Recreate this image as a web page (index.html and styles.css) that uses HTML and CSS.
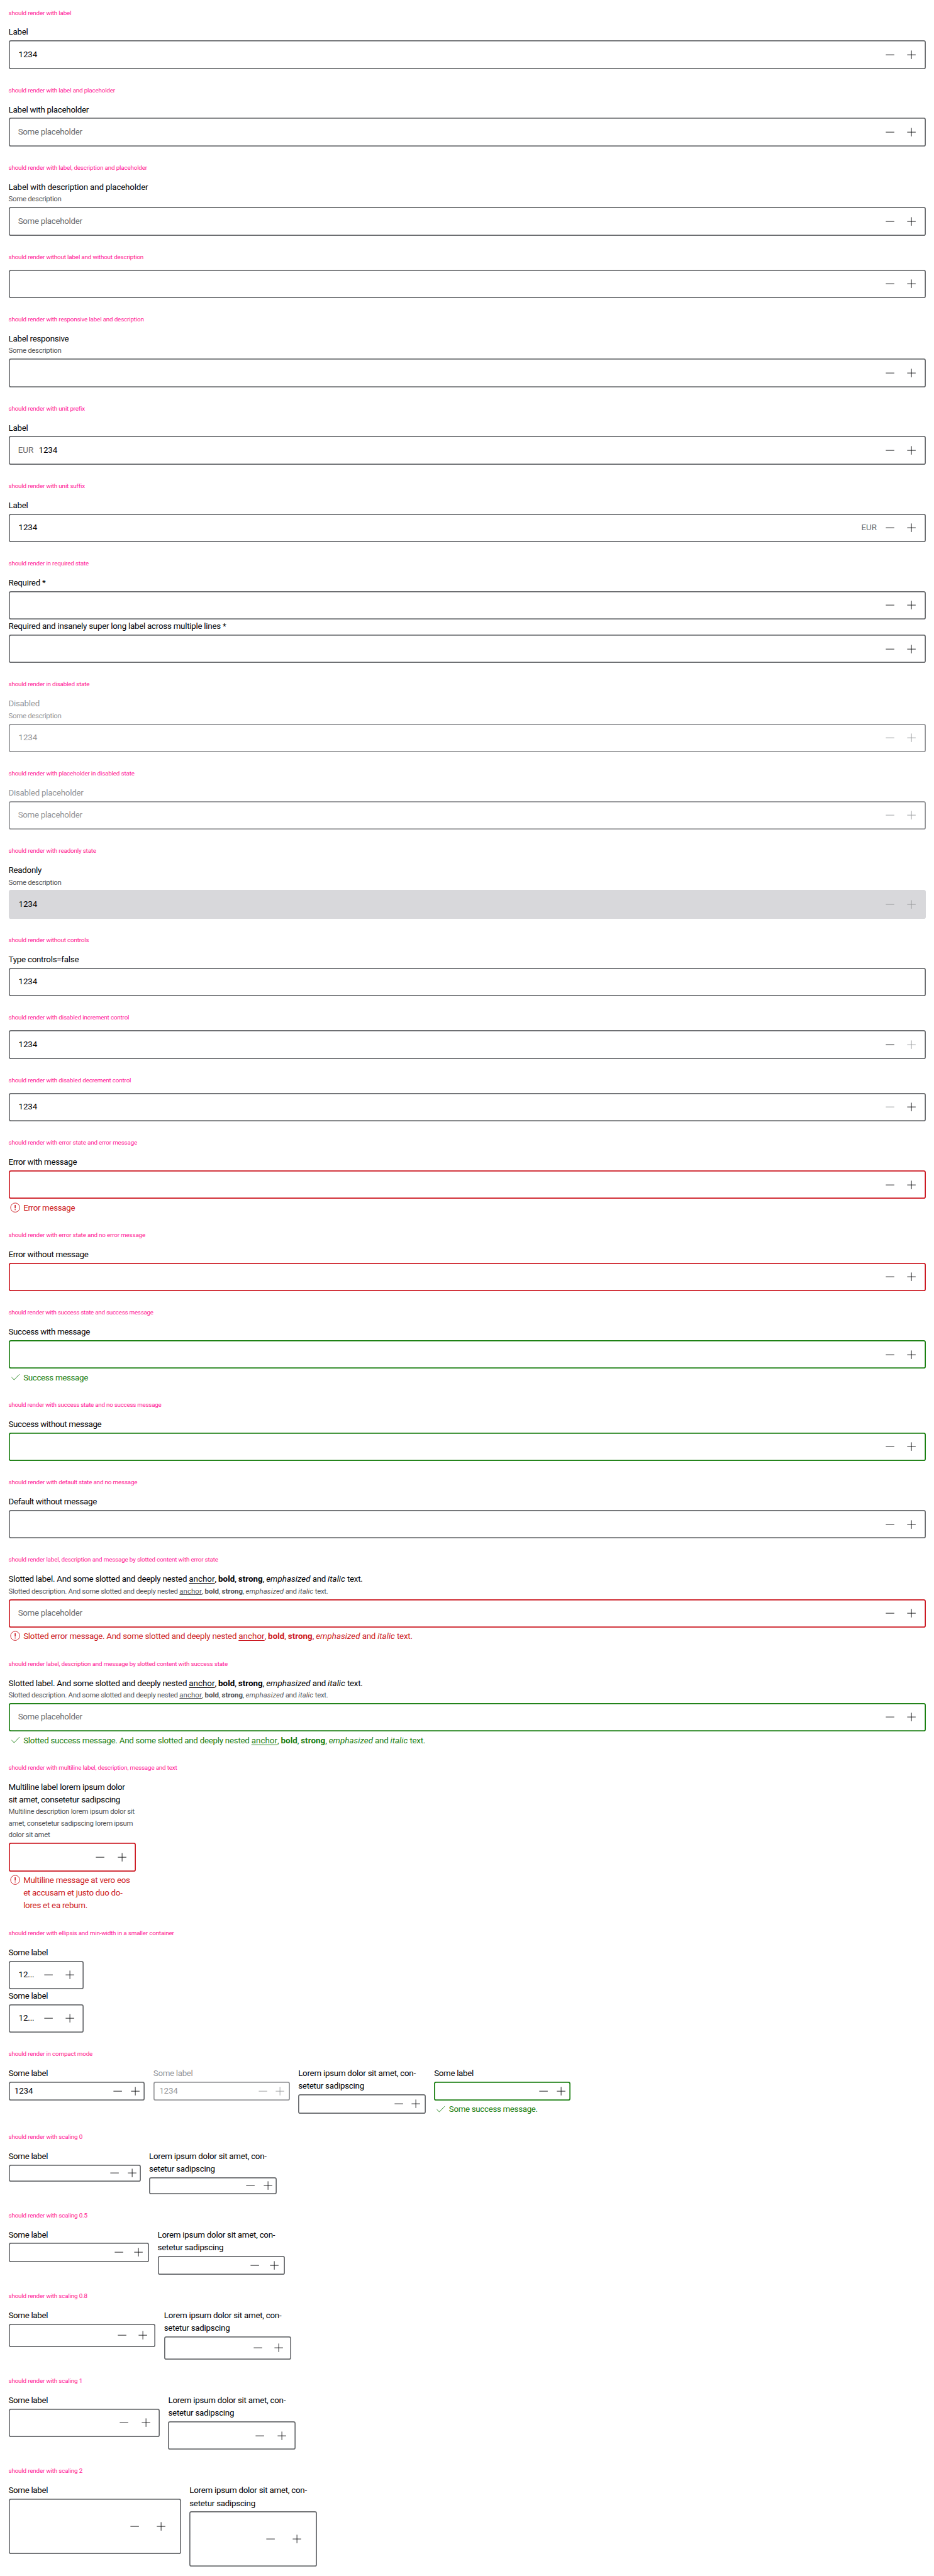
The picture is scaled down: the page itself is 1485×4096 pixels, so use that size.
FILE: index.html
```html
<!DOCTYPE html>
<html lang="en">
<head>
<meta charset="utf-8">
<title>Number input states</title>
<link rel="stylesheet" href="styles.css">
</head>
<body>
<svg class="sprite" aria-hidden="true">
  <symbol id="minus" viewBox="0 0 24 24"><path d="M4 12H20"/></symbol>
  <symbol id="plus" viewBox="0 0 24 24"><path d="M4 12H20M12 4V20"/></symbol>
  <symbol id="error" viewBox="0 0 24 24"><circle cx="12" cy="12" r="8.6"/><path class="bar" d="M12 7.2V13.4M12 15V16.8"/></symbol>
  <symbol id="check" viewBox="0 0 24 24"><path d="M5.2 11.8L10 16.6L20 6.2"/></symbol>
</svg>

<section>
  <h2>should render with label</h2>
  <div class="field"><div class="label">Label</div><div class="box"><span class="value">1234</span><svg><use href="#minus"/></svg><svg><use href="#plus"/></svg></div></div>
</section>
<section>
  <h2>should render with label and placeholder</h2>
  <div class="field"><div class="label">Label with placeholder</div><div class="box"><span class="placeholder">Some placeholder</span><svg><use href="#minus"/></svg><svg><use href="#plus"/></svg></div></div>
</section>
<section>
  <h2>should render with label, description and placeholder</h2>
  <div class="field"><div class="label wide">Label with description and placeholder</div><div class="desc">Some description</div><div class="box"><span class="placeholder">Some placeholder</span><svg><use href="#minus"/></svg><svg><use href="#plus"/></svg></div></div>
</section>
<section>
  <h2>should render without label and without description</h2>
  <div class="field"><div class="box"><svg><use href="#minus"/></svg><svg><use href="#plus"/></svg></div></div>
</section>
<section>
  <h2>should render with responsive label and description</h2>
  <div class="field"><div class="label">Label responsive</div><div class="desc">Some description</div><div class="box"><svg><use href="#minus"/></svg><svg><use href="#plus"/></svg></div></div>
</section>
<section>
  <h2>should render with unit prefix</h2>
  <div class="field"><div class="label">Label</div><div class="box"><span class="unit prefix">EUR</span><span class="value">1234</span><svg><use href="#minus"/></svg><svg><use href="#plus"/></svg></div></div>
</section>
<section>
  <h2>should render with unit suffix</h2>
  <div class="field"><div class="label">Label</div><div class="box"><span class="value">1234</span><span class="unit suffix">EUR</span><svg><use href="#minus"/></svg><svg><use href="#plus"/></svg></div></div>
</section>
<section>
  <h2>should render in required state</h2>
  <div class="field"><div class="label">Required *</div><div class="box"><svg><use href="#minus"/></svg><svg><use href="#plus"/></svg></div></div>
  <div class="field"><div class="label">Required and insanely super long label across multiple lines *</div><div class="box"><svg><use href="#minus"/></svg><svg><use href="#plus"/></svg></div></div>
</section>
<section>
  <h2>should render in disabled state</h2>
  <div class="field disabled"><div class="label">Disabled</div><div class="desc">Some description</div><div class="box"><span class="value">1234</span><svg><use href="#minus"/></svg><svg><use href="#plus"/></svg></div></div>
</section>
<section>
  <h2>should render with placeholder in disabled state</h2>
  <div class="field disabled"><div class="label">Disabled placeholder</div><div class="box"><span class="placeholder">Some placeholder</span><svg><use href="#minus"/></svg><svg><use href="#plus"/></svg></div></div>
</section>
<section>
  <h2>should render with readonly state</h2>
  <div class="field readonly"><div class="label">Readonly</div><div class="desc">Some description</div><div class="box"><span class="value">1234</span><svg><use href="#minus"/></svg><svg><use href="#plus"/></svg></div></div>
</section>
<section>
  <h2>should render without controls</h2>
  <div class="field"><div class="label">Type controls=false</div><div class="box"><span class="value">1234</span></div></div>
</section>
<section>
  <h2>should render with disabled increment control</h2>
  <div class="field"><div class="box"><span class="value">1234</span><svg><use href="#minus"/></svg><svg class="off"><use href="#plus"/></svg></div></div>
</section>
<section>
  <h2>should render with disabled decrement control</h2>
  <div class="field"><div class="box"><span class="value">1234</span><svg class="off"><use href="#minus"/></svg><svg><use href="#plus"/></svg></div></div>
</section>
<section>
  <h2>should render with error state and error message</h2>
  <div class="field error"><div class="label tight">Error with message</div><div class="box"><svg><use href="#minus"/></svg><svg><use href="#plus"/></svg></div><div class="message"><svg><use href="#error"/></svg><span class="tight">Error message</span></div></div>
</section>
<section>
  <h2>should render with error state and no error message</h2>
  <div class="field error"><div class="label tight">Error without message</div><div class="box"><svg><use href="#minus"/></svg><svg><use href="#plus"/></svg></div></div>
</section>
<section>
  <h2 class="dense">should render with success state and success message</h2>
  <div class="field success"><div class="label tight">Success with message</div><div class="box"><svg><use href="#minus"/></svg><svg><use href="#plus"/></svg></div><div class="message"><svg><use href="#check"/></svg><span class="tight">Success message</span></div></div>
</section>
<section>
  <h2 class="dense">should render with success state and no success message</h2>
  <div class="field success"><div class="label tight">Success without message</div><div class="box"><svg><use href="#minus"/></svg><svg><use href="#plus"/></svg></div></div>
</section>
<section>
  <h2>should render with default state and no message</h2>
  <div class="field"><div class="label tight">Default without message</div><div class="box"><svg><use href="#minus"/></svg><svg><use href="#plus"/></svg></div></div>
</section>
<section>
  <h2>should render label, description and message by slotted content with error state</h2>
  <div class="field error"><div class="label">Slotted label. And some slotted and deeply nested <u>anchor</u>, <b>bold</b>, <strong>strong</strong>, <em>emphasized</em> and <i>italic</i> text.</div><div class="desc">Slotted description. And some slotted and deeply nested <u>anchor</u>, <b>bold</b>, <strong>strong</strong>, <em>emphasized</em> and <i>italic</i> text.</div><div class="box"><span class="placeholder">Some placeholder</span><svg><use href="#minus"/></svg><svg><use href="#plus"/></svg></div><div class="message"><svg><use href="#error"/></svg><span>Slotted error message. And some slotted and deeply nested <u>anchor</u>, <b>bold</b>, <strong>strong</strong>, <em>emphasized</em> and <i>italic</i> text.</span></div></div>
</section>
<section>
  <h2>should render label, description and message by slotted content with success state</h2>
  <div class="field success"><div class="label">Slotted label. And some slotted and deeply nested <u>anchor</u>, <b>bold</b>, <strong>strong</strong>, <em>emphasized</em> and <i>italic</i> text.</div><div class="desc">Slotted description. And some slotted and deeply nested <u>anchor</u>, <b>bold</b>, <strong>strong</strong>, <em>emphasized</em> and <i>italic</i> text.</div><div class="box"><span class="placeholder">Some placeholder</span><svg><use href="#minus"/></svg><svg><use href="#plus"/></svg></div><div class="message"><svg><use href="#check"/></svg><span>Slotted success message. And some slotted and deeply nested <u>anchor</u>, <b>bold</b>, <strong>strong</strong>, <em>emphasized</em> and <i>italic</i> text.</span></div></div>
</section>
<section>
  <h2>should render with multiline label, description, message and text</h2>
  <div class="field error narrow"><div class="label">Multiline label lorem ipsum dolor<br>sit amet, consetetur sadipscing</div><div class="desc">Multiline description lorem ipsum dolor sit<br>amet, consetetur sadipscing lorem ipsum<br>dolor sit amet</div><div class="box"><svg><use href="#minus"/></svg><svg><use href="#plus"/></svg></div><div class="message"><svg><use href="#error"/></svg><span>Multiline message at vero eos<br>et accusam et justo duo do-<br>lores et ea rebum.</span></div></div>
</section>
<section>
  <h2>should render with ellipsis and min-width in a smaller container</h2>
  <div class="field smallest"><div class="label tight">Some label</div><div class="box"><span class="value">12...</span><svg><use href="#minus"/></svg><svg><use href="#plus"/></svg></div></div>
  <div class="field smallest"><div class="label tight">Some label</div><div class="box"><span class="value">12...</span><svg><use href="#minus"/></svg><svg><use href="#plus"/></svg></div></div>
</section>
<section>
  <h2>should render in compact mode</h2>
  <div class="row compact">
    <div class="field"><div class="label tight">Some label</div><div class="box"><span class="value">1234</span><svg><use href="#minus"/></svg><svg><use href="#plus"/></svg></div></div>
    <div class="field disabled"><div class="label tight">Some label</div><div class="box"><span class="value">1234</span><svg><use href="#minus"/></svg><svg><use href="#plus"/></svg></div></div>
    <div class="field narrow"><div class="label">Lorem ipsum dolor sit amet, con-<br>setetur sadipscing</div><div class="box"><svg><use href="#minus"/></svg><svg><use href="#plus"/></svg></div></div>
    <div class="field success"><div class="label tight">Some label</div><div class="box"><svg><use href="#minus"/></svg><svg><use href="#plus"/></svg></div><div class="message"><svg><use href="#check"/></svg><span class="tight">Some success message.</span></div></div>
  </div>
</section>
<section>
  <h2>should render with scaling 0</h2>
  <div class="row scale-0">
    <div class="field"><div class="label tight">Some label</div><div class="box"><svg><use href="#minus"/></svg><svg><use href="#plus"/></svg></div></div>
    <div class="field narrow"><div class="label">Lorem ipsum dolor sit amet, con-<br>setetur sadipscing</div><div class="box"><svg><use href="#minus"/></svg><svg><use href="#plus"/></svg></div></div>
  </div>
</section>
<section>
  <h2>should render with scaling 0.5</h2>
  <div class="row scale-05">
    <div class="field"><div class="label tight">Some label</div><div class="box"><svg><use href="#minus"/></svg><svg><use href="#plus"/></svg></div></div>
    <div class="field narrow"><div class="label">Lorem ipsum dolor sit amet, con-<br>setetur sadipscing</div><div class="box"><svg><use href="#minus"/></svg><svg><use href="#plus"/></svg></div></div>
  </div>
</section>
<section>
  <h2>should render with scaling 0.8</h2>
  <div class="row scale-08">
    <div class="field"><div class="label tight">Some label</div><div class="box"><svg><use href="#minus"/></svg><svg><use href="#plus"/></svg></div></div>
    <div class="field narrow"><div class="label">Lorem ipsum dolor sit amet, con-<br>setetur sadipscing</div><div class="box"><svg><use href="#minus"/></svg><svg><use href="#plus"/></svg></div></div>
  </div>
</section>
<section>
  <h2>should render with scaling 1</h2>
  <div class="row scale-1">
    <div class="field"><div class="label tight">Some label</div><div class="box"><svg><use href="#minus"/></svg><svg><use href="#plus"/></svg></div></div>
    <div class="field narrow"><div class="label">Lorem ipsum dolor sit amet, con-<br>setetur sadipscing</div><div class="box"><svg><use href="#minus"/></svg><svg><use href="#plus"/></svg></div></div>
  </div>
</section>
<section>
  <h2>should render with scaling 2</h2>
  <div class="row scale-2">
    <div class="field"><div class="label tight">Some label</div><div class="box"><svg><use href="#minus"/></svg><svg><use href="#plus"/></svg></div></div>
    <div class="field narrow"><div class="label">Lorem ipsum dolor sit amet, con-<br>setetur sadipscing</div><div class="box"><svg><use href="#minus"/></svg><svg><use href="#plus"/></svg></div></div>
  </div>
</section>
</body>
</html>
```
FILE: styles.css
```css
/* All lengths are in rem, so the root size sets the scale of the page. */
html { font-size: 13.5px; }

* { box-sizing: border-box; }

body {
  margin: 0;
  padding: 1rem;
  display: flex;
  flex-direction: column;
  gap: 2rem;
  background: #fff;
  color: #010205;
  font-family: Roboto, "Liberation Sans", sans-serif;
  font-size: 0.9875rem;
  line-height: 1.5rem;
  letter-spacing: -0.0185rem;
  white-space: nowrap;
}

.sprite { position: absolute; width: 0; height: 0; }

h2 {
  margin: 0 0 1rem;
  color: #ff1493;
  font-size: 0.73125rem;
  font-weight: 400;
  line-height: 1rem;
  letter-spacing: -0.0137rem;
}

h2.dense { letter-spacing: -0.02rem; }

.field {
  --state: #6b6d70;
  --edge: 1.625rem;
  --step: 2.5625rem;
  --height: 3.375rem;
  --inset: 1.125rem;
}

.error { --state: #cc1922; }
.success { --state: #197e10; }

.wide { letter-spacing: -0.012rem; }
.tight { letter-spacing: -0.024rem; }

/* Optical nudge: the text sits slightly below the middle of its line. */
.label {
  padding-top: 0.0625rem;
  margin-bottom: -0.0625rem;
}

.desc {
  color: #535457;
  font-size: 0.85rem;
  line-height: 1.367rem;
  letter-spacing: -0.0243rem;
}

.label + .box { margin-top: 0.3125rem; }
.label + .desc { margin-top: 0.0625rem; }
.label + .box,
.label + .desc { margin-top: 0; }
.label:has(+ .box) { margin-bottom: 0.1875rem; }
.desc + .box { margin-top: 0.25rem; }

.box {
  display: flex;
  align-items: center;
  justify-content: flex-end;
  height: var(--height);
  padding-left: var(--inset);
  padding-right: calc(var(--edge) - 0.75rem);
  border-radius: 0.25rem;
  box-shadow: inset 0 0 0 0.125rem var(--state);
}

.box svg {
  flex: none;
  width: 1.5rem;
  height: 1.5rem;
  fill: none;
  stroke: #010205;
  stroke-width: 1;
}

.box svg + svg { margin-left: calc(var(--step) - 1.5rem); }
.box svg.off { stroke: #949598; }

.value,
.placeholder {
  flex: 1;
  min-width: 0;
}

.value {
  padding-left: 0.0625rem;
  letter-spacing: -0.008rem;
}

.placeholder, .unit { color: #6b6d70; }
.placeholder { letter-spacing: -0.0225rem; }
.unit { letter-spacing: 0; }
.prefix { margin-right: 0.5625rem; }
.suffix { margin-right: 0.8125rem; }

.message {
  display: flex;
  align-items: flex-start;
  gap: 0.25rem;
  margin-top: 0.25rem;
  color: var(--state);
}

.message span {
  margin-top: 0.0625rem;
  margin-bottom: -0.0625rem;
}

.message svg {
  flex: none;
  width: 1.5rem;
  height: 1.5rem;
  fill: none;
  stroke: currentColor;
  stroke-width: 1.1;
}

.bar { stroke-width: 1.8; }

u { text-underline-offset: 0.12em; }
u, b, strong, em, i { letter-spacing: 0.004rem; }
b, strong { font-weight: 700; }

.disabled { --state: #949598; color: #949598; }
.disabled .desc,
.disabled .placeholder { color: #949598; }
.disabled .box svg,
.readonly .box svg { stroke: #949598; }
.readonly .box { background: #d8d8db; box-shadow: none; }

.narrow { width: 15rem; }
.smallest { width: 8.875rem; }

.row {
  display: flex;
  align-items: flex-start;
  gap: 1rem;
}

.row .field { flex: none; width: var(--width); }
.row .field.narrow { width: 15rem; }

.compact .field { --width: 16.0625rem; --height: 2.25rem; --edge: 1.125rem; --step: 2.0625rem; --inset: 0.625rem; }
.scale-0 .field { --width: 15.5625rem; --height: 2rem; --edge: 1rem; --step: 2.0625rem; }
.scale-05 .field { --width: 16.5625rem; --height: 2.25rem; --edge: 1.25rem; --step: 2.3125rem; }
.scale-08 .field { --width: 17.3125rem; --height: 2.75rem; --edge: 1.5rem; --step: 2.4375rem; }
.scale-1 .field { --width: 17.8125rem; }
.scale-2 .field { --width: 20.3125rem; --height: 6.5rem; --edge: 2.375rem; --step: 3.0625rem; }
```
